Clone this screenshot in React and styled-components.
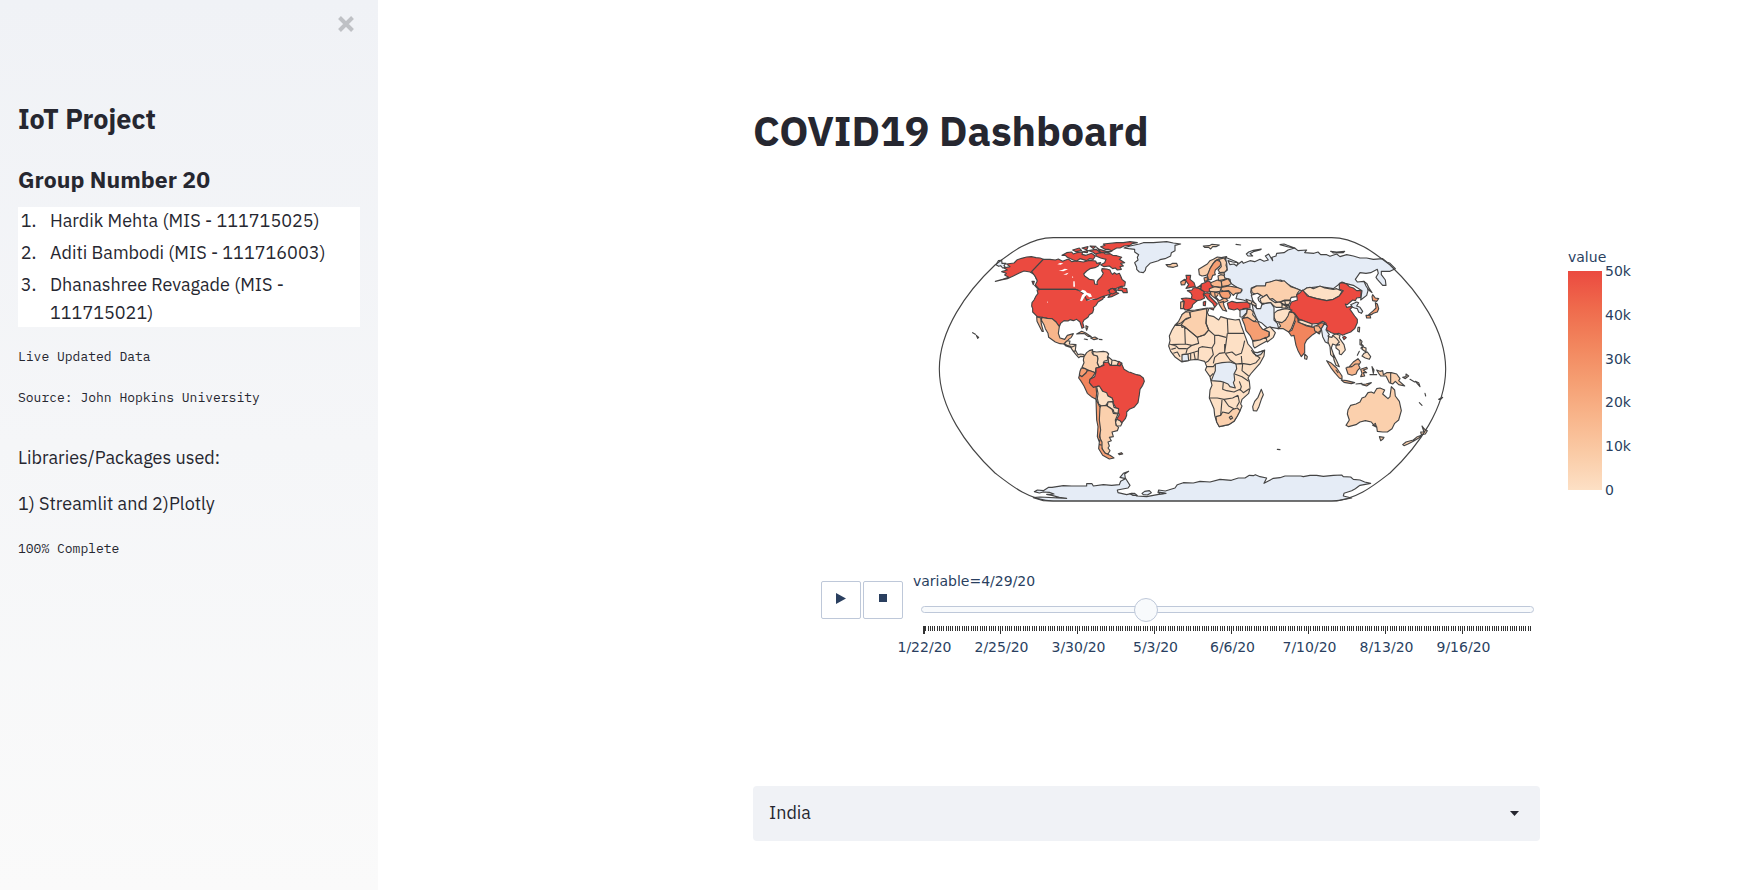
import React, { useState } from "react";
import styled, { createGlobalStyle } from "styled-components";

const ink = "#262730";
const plotInk = "#2a3f5f";
const sans = `"IBM Plex Sans", "Noto Sans", sans-serif`;
const plotFont = `"DejaVu Sans", Verdana, sans-serif`;

const Global = createGlobalStyle`
  *, *::before, *::after { box-sizing: border-box; }
  body { margin: 0; background: #fff; color: ${ink}; font-family: ${sans}; font-size: 18px; }
  h1, h2, h3, p, ol { margin: 0; }
`;

const Page = styled.div`
  display: flex;
  min-height: 100vh;
`;

const Sidebar = styled.aside`
  flex: 0 0 378px;
  padding: 12px 18px;
  background: linear-gradient(180deg, #f0f2f6, #fafafa);
`;

const CloseButton = styled.button`
  display: block;
  margin: 0 2px 0 auto;
  padding: 3px;
  border: 0;
  background: none;
  line-height: 0;
`;

const ProjectTitle = styled.h2`
  margin-top: 63px;
  font-size: 27px;
  line-height: 40px;
`;

const GroupTitle = styled.h3`
  margin-top: 24px;
  font-size: 23px;
  line-height: 32px;
`;

const Members = styled.ol`
  display: flex;
  flex-direction: column;
  gap: 4px;
  margin-top: 12px;
  padding: 0 0 0 32px;
  background: #fff;
  line-height: 28px;
`;

const Member = styled.li`
  padding-right: 32px;
  &::marker { content: counter(list-item) ".\\2002\\2005"; }
`;

const MonoLine = styled.p`
  margin-top: ${(p) => p.$gap}px;
  font-family: "IBM Plex Mono", "Liberation Mono", monospace;
  font-size: 13px;
  line-height: 20px;
`;

const TextLine = styled.p`
  margin-top: ${(p) => p.$gap}px;
  line-height: 28px;
`;

const Main = styled.main`
  flex: 1;
  min-width: 0;
  display: flex;
  justify-content: center;
  padding: 99px 0 48px 174px;
`;

const Column = styled.div`
  flex: 0 1 787px;
  min-width: 0;
`;

const Title = styled.h1`
  font-size: 41px;
  line-height: 64px;
`;

const Chart = styled.section`
  width: 900px;
  padding-top: 57px;
  color: ${plotInk};
  font: 14px/16px ${plotFont};
`;

const MapRow = styled.div`
  display: flex;
  gap: 118px;
  padding-left: 177px;
`;

const WorldMap = styled.svg`
  flex: none;
  width: 520px;
  height: 290px;
  stroke: #444;
  stroke-width: 3.4;
  stroke-linejoin: round;
`;

const Legend = styled.div`
  padding-top: 29px;
`;

const LegendBody = styled.div`
  display: flex;
  gap: 3px;
  margin-top: 6px;
`;

const ColorBar = styled.div`
  width: 34px;
  height: 219px;
  background: linear-gradient(0deg, #fde0c5, #facba6, #f8b58b, #f59e72, #f2855d, #ef6a4c, #eb4a40);
`;

const LegendScale = styled.div`
  display: flex;
  flex-direction: column;
  justify-content: space-between;
  margin: -8px 0;
`;

const Controls = styled.div`
  display: flex;
  gap: 10px;
  padding: 63px 0 0 68px;
`;

const PlayGroup = styled.div`
  display: flex;
  gap: 2px;
  padding-top: 8px;
`;

const PlayButton = styled.button`
  display: grid;
  place-items: center;
  width: 40px;
  height: 38px;
  padding: 0 0 4px;
  border: 1px solid #bec8d9;
  border-radius: 2px;
  background: #fff;
`;

const SliderPanel = styled.div`
  flex: none;
  width: 630px;
`;

const SliderLabel = styled.label`
  display: block;
`;

const Range = styled.input`
  display: block;
  appearance: none;
  width: 613px;
  height: 24px;
  margin: 8px 0 0 8px;
  background: none;
  &::-webkit-slider-runnable-track {
    height: 7px;
    border: 1px solid #bec8d9;
    border-radius: 4px;
    background: #f8fafc;
  }
  &::-webkit-slider-thumb {
    appearance: none;
    width: 24px;
    height: 24px;
    margin-top: -9px;
    border: 1px solid #bec8d9;
    border-radius: 50%;
    background: #f8fafc;
  }
`;

const Ticks = styled.svg`
  display: block;
  width: 612px;
  height: 9px;
  margin: 5px 0 0 9px;
  shape-rendering: crispEdges;
  stroke: #333;
`;

const Dates = styled.div`
  display: grid;
  grid-template-columns: repeat(8, 77px);
  width: 616px;
  margin: 4px 0 0 -27px;
  text-align: center;
`;

const SelectBox = styled.div`
  position: relative;
  margin-top: 131px;
`;

const Select = styled.select`
  display: block;
  appearance: none;
  width: 100%;
  height: 55px;
  padding: 0 16px 2px;
  border: 0;
  border-radius: 4px;
  background: #f0f2f6;
  color: ${ink};
  font: 18px ${sans};
`;

const Caret = styled.svg`
  position: absolute;
  right: 21px;
  top: 25px;
  pointer-events: none;
`;

const C = {
  none: "#e5ecf6",
  a: "#fde0c5",
  b: "#fbd0ad",
  c: "#f8b58b",
  d: "#f59e72",
  e: "#f2855d",
  r: "#eb4a40",
  w: "#fff",
};

const NORTH_AMERICA = [
  ["r", "M196,184L218,178L236,172L224,165L229,160L215,155L232,150L222,144L240,140L230,132L252,129L262,119L275,115L290,111L304,110L318,113L330,114L340,118L305,155L316,163L320,180L314,164L300,156L282,153L268,159L250,168L232,176L214,180Z"],
  ["r", "M340,118L360,118L376,120L385,117L398,124L415,117L425,125L440,123L460,126L478,121L497,123L500,130L512,128L505,138L495,143L480,146L470,153L461,162L464,168L478,178L492,180L494,192L502,193L501,186L504,180L514,170L520,160L515,152L516,146L530,147L540,150L543,158L548,163L553,158L560,163L568,160L572,168L576,178L586,186L584,198L570,200L556,206L543,206L534,212L552,208L562,210L554,216L566,220L545,230L534,232L542,222L524,228L524,232L514,234L500,238L478,242L468,238L458,222L448,212L436,208L328,208L316,195L322,182L316,170L305,155Z"],
  ["r", "M498,94L510,98L520,97L526,102L540,101L548,106L560,107L575,112L568,118L584,128L572,130L580,138L570,140L574,148L562,150L556,144L548,146L538,138L522,140L512,134L524,128L528,118L512,114L498,108Z"],
  ["r", "M512,80L525,76L520,72L560,68L580,68L600,65L622,68L606,71L600,76L582,78L570,84L560,84L545,92L535,88L525,88Z"],
  ["r", "M396,106L410,98L425,96L430,102L440,98L458,96L456,103L468,106L485,100L496,108L490,118L478,116L470,122L450,116L440,123L430,120L412,112L406,106Z"],
  ["r", "M428,90L448,84L455,92L438,95ZM456,84L474,80L470,90ZM480,78L498,79L490,86ZM476,92L498,88L512,98L496,102L488,96ZM500,82L508,88L530,94L546,93L534,98L512,96ZM456,96L474,92L472,98Z"],
  ["r", "M564,206L576,199L577,204L590,206L592,218L580,218L576,212L564,211ZM538,209L548,205L560,216L548,222L538,218Z"],
  ["r", "M328,208L436,208L448,212L462,222L470,241L485,238L500,238L512,232L522,228L518,238L504,246L498,256L490,262L491,268L488,278L478,284L474,292L462,300L458,308L462,322L456,325L450,306L440,298L430,302L420,299L414,303L402,302L392,310L388,320L378,306L366,296L352,295L336,292L322,290L308,276L308,266L305,258L306,248L312,240L318,228L324,220L321,210Z"],
  ["c", "M336,292L352,295L366,296L378,306L388,320L385,340L390,354L404,358L412,346L430,341L424,352L416,358L410,366L402,372L390,371L376,366L356,352L354,340L346,326L342,314L334,300ZM320,290L332,294L334,312L340,334L336,334L328,318L321,304Z"],
  ["a", "M402,372L410,363L420,363L418,372L438,374L436,390L444,404L452,402L462,404L463,410L452,409L446,413L438,404L430,394L422,382L408,378ZM404,372L414,377L424,380M424,382L438,376M430,394L438,392"],
  ["c", "M440,342L455,334L466,338L484,350L474,349L462,340ZM482,354L495,351L504,356L492,359ZM508,358L516,359ZM463,357L472,359ZM468,317L474,320L470,331L468,324Z"],
  ["r", "M128,338L136,343ZM139,346L146,352L143,355ZM306,184L313,184L310,194ZM314,196L322,205L328,209Z"],
  ["none", "M198,134L205,122L215,121L216,130L228,130L222,136L226,142L218,144L212,137L206,139Z"],
  ["none", "M582,84L600,78L628,72L640,68L670,68L710,65L730,69L752,72L735,76L735,92L724,98L722,108L705,116L690,119L685,122L660,130L648,142L646,151L640,158L628,156L620,148L620,142L614,128L624,120L622,112L626,104L614,96L614,88L596,86Z"],
  ["b", "M708,134L720,134L728,130L740,130L743,138L730,142L714,140Z"],
];

const LAKES = [
  "M382,133L390,129L400,130L392,134Z", "M386,152L396,150L404,146L414,148L400,154Z",
  "M400,164L410,160L416,158L410,164Z", "M430,184L434,184L435,200L430,200Z", "M426,168L430,172L427,174Z",
  "M444,211L452,214L458,209L466,212L471,218L482,221L486,230L478,232L470,224L464,230L456,244L450,242L456,226L462,220Z",
  "M470,242L486,236L496,235L480,241Z", "M351,244L354,247L351,248Z",
];

const SOUTH = [
  ["b", "M462,50L470,38L478,32L488,29L486,38L490,44L502,48L504,56L502,70L508,82L498,84L496,98L480,92L466,86L456,82L462,68L460,60Z"],
  ["a", "M488,34L500,36L520,34L530,36L536,42L532,52L534,60L522,64L520,74L508,82L502,68L504,56L502,48L490,44Z"],
  ["a", "M534,50L546,60L558,62L567,66L562,76L544,77L536,70ZM546,60L544,77"],
  ["r", "M566,64L576,70L570,80L562,76Z"],
  ["d", "M454,84L466,86L472,92L468,99L456,110L448,104L450,94Z"],
  ["e", "M448,106L456,110L468,99L472,92L480,92L496,98L488,110L480,118L479,126L484,136L498,140L500,160L498,178L484,170L472,160L462,138L452,122L446,114Z"],
  ["r", "M508,82L522,76L520,68L534,66L540,76L562,76L570,78L574,70L582,88L596,96L604,98L620,104L630,106L640,114L643,124L638,136L630,148L628,164L624,188L612,202L598,208L590,216L590,226L586,236L576,248L560,238L568,224L560,208L550,190L546,174L530,166L518,154L506,138L490,142L478,128L480,118L494,110L498,96L498,84Z"],
  ["a", "M500,140L508,138L518,154L530,158L534,168L546,174L550,184L534,186L528,196L514,198L506,192L502,176L504,160Z"],
  ["a", "M534,186L548,186L552,202L566,206L564,220L552,218L550,210L532,198Z"],
  ["a", "M560,238L570,242L576,250L572,258L560,258L556,248Z"],
  ["b", "M512,198L528,196L546,208L550,220L564,222L556,240L558,256L566,262L562,272L546,276L550,290L538,292L544,302L534,306L538,318L534,324L540,332L534,342L522,338L514,320L510,290L508,250L506,210Z"],
  ["d", "M498,178L504,190L510,202L508,240L512,270L508,290L516,306L516,326L526,340L540,346L552,354L538,357L518,346L506,326L508,306L502,290L504,260L500,240ZM504,296L511,304M506,312L514,316"],
  ["d", "M565,341L574,338L578,342L568,344Z"],
  ["none", "M365,483L340,482L310,473L330,471L410,475L388,472L366,466L350,463L372,462L358,457L340,456L328,459L313,455L322,450L340,452L356,442L366,442L400,437L425,438L470,438L470,431L486,431L490,438L520,434L545,436L568,434L572,424L586,416L570,412L580,400L596,394L584,402L586,414L600,436L594,444L562,450L564,458L590,464L606,460L620,468L650,470L682,464L704,460L684,458L686,450L706,453L735,444L742,434L760,428L790,429L810,424L840,426L870,418L904,421L925,414L945,414L958,406L970,407L976,404L990,410L1010,414L1002,430L1030,415L1050,413L1065,408L1080,408L1112,408L1120,410L1140,406L1160,406L1180,409L1210,406L1235,405L1240,410L1262,411L1270,418L1290,420L1304,426L1322,430L1290,436L1276,446L1265,452L1242,460L1240,468L1265,474L1220,483Z"],
  ["none", "M636,460L644,454L658,452L664,458L652,465L640,464Z"],
  ["none", "M600,461L614,460L622,466L608,466ZM686,456L708,460L690,462Z"],
];

const EAST = [
  ["b", "M118,164L116,148L132,138L142,132L150,122L160,118L172,111L184,113L200,110L196,120L176,117L166,122L160,130L150,146L146,160L138,166L126,168Z"],
  ["d", "M142,166L150,146L160,130L170,120L184,126L180,138L166,150L164,158L166,164L158,166L154,178L146,180Z"],
  ["b", "M176,118L192,114L200,126L198,136L202,146L196,156L180,158L174,150L184,140L182,128Z"],
  ["none", "M196,112L216,120L230,126L232,134L246,124L250,130L270,122L284,125L300,118L312,124L325,120L316,108L326,102L338,122L336,112L348,108L350,100L372,98L384,90L404,84L414,92L440,90L434,98L462,100L474,96L482,104L500,104L510,109L530,102L540,110L560,104L580,108L600,114L620,114L640,118L668,116L680,126L690,130L706,146L690,154L664,154L664,164L676,180L678,196L668,196L652,178L648,172L655,160L652,148L632,158L618,160L600,158L586,178L592,186L612,184L622,198L624,212L620,226L602,240L606,212L580,196L556,190L546,186L520,206L480,200L440,204L428,214L392,198L362,180L348,182L330,186L318,190L316,198L288,198L274,204L272,216L280,234L276,250L250,240L228,236L232,222L246,212L228,200L212,190L210,178L194,174L190,160L202,150L200,130Z"],
  ["none", "M264,108L259,102L266,96L280,91L304,87L300,90L280,95L270,101L278,108ZM360,74L372,72L382,76L404,84L385,81ZM512,94L530,96L554,94L550,98L520,99ZM228,73L242,75Z"],
  ["a", "M130,78L148,77L156,73L178,75L168,80L158,80L152,87L146,82L134,82Z"],
  ["w", "M204,122L218,126L234,128L230,138L222,132L210,134Z"],
  ["b", "M274,206L290,198L316,198L318,188L330,186L348,180L366,184L372,182L392,200L404,204L420,210L412,220L410,230L394,232L390,240L374,240L360,246L350,246L338,236L326,238L320,224L310,230L296,222L286,222L276,218Z"],
  ["a", "M310,230L320,224L330,238L346,248L360,246L380,252L366,262L348,262L340,256L332,248L318,250L304,250L300,236Z"],
  ["a", "M360,246L374,242L392,242L386,254L370,252ZM366,254L386,256L388,264L366,264ZM374,240L378,262M362,250L384,262"],
  ["a", "M428,212L440,204L450,202L460,206L480,198L494,204L520,208L530,206L546,214L538,228L520,238L500,242L470,236L448,230Z"],
  ["r", "M428,210L442,228L470,236L500,242L520,238L538,228L550,212L538,208L538,190L546,188L560,192L568,200L580,204L590,212L604,212L602,232L590,234L586,242L578,240L562,254L556,252L560,262L580,258L570,268L584,288L592,298L592,308L584,326L572,336L556,342L548,346L536,340L526,342L514,338L500,330L498,310L488,304L476,310L456,312L430,302L416,296L404,280L392,274L388,260L394,246L412,240L410,224L418,220Z"],
  ["r", "M548,352L554,349L559,353L552,359Z"],
  ["a", "M594,322L599,322L598,336L593,334Z"],
  ["none", "M572,254L590,246L596,248L590,258L600,262L608,274L604,280L596,276L592,266L584,264L578,262Z"],
  ["none", "M612,184L620,190L628,206L636,218L626,210L618,198Z"],
  ["d", "M636,230L638,224L646,234L656,236L650,244L638,242ZM646,248L652,252L656,266L652,276L640,280L634,284L626,284L640,272L648,264ZM618,286L630,286L632,294L620,294Z"],
  ["a", "M414,298L430,302L456,312L456,320L440,316L418,308Z"],
  ["e", "M392,284L404,282L414,298L414,306L440,318L460,322L484,308L494,310L484,328L478,342L470,336L458,344L440,360L434,372L434,398L424,410L414,392L408,376L402,346L394,348L386,336L396,330L406,304L398,300Z"],
  ["c", "M462,318L476,318L484,330L474,338L464,332Z"],
  ["a", "M434,402L442,410L440,418L434,416Z"],
  ["c", "M384,276L400,278L406,286L404,300L394,326L386,336L370,326L354,326L362,318L356,308L376,300L382,288Z"],
  ["a", "M342,280L352,272L366,268L378,266L396,270L388,276L384,288L376,300L366,308L348,304L342,292Z"],
  ["none", "M276,250L288,262L302,256L318,250L332,248L342,262L342,300L352,310L356,326L334,322L322,324L304,308L294,304L288,292L280,272Z"],
  ["w", "M274,226L292,220L302,226L294,234L296,242L306,252L302,266L290,266L286,252L278,240Z"],
  ["r", "M202,250L216,244L230,248L262,246L270,252L270,264L250,266L240,272L232,266L222,270L206,266Z"],
  ["a", "M258,238L276,244L288,252L288,258L274,252L264,248ZM274,246L276,254"],
  ["none", "M240,270L262,266L260,278L246,292L240,290Z"],
  ["b", "M262,268L272,268L280,276L278,284L290,298L284,304L268,302L250,292L260,280Z"],
  ["d", "M246,296L262,292L280,304L294,306L300,318L308,328L328,336L326,350L300,360L278,362L270,346L258,332L254,316Z"],
  ["a", "M278,364L300,360L318,352L322,362L300,374L284,384L280,378Z"],
  ["a", "M312,328L330,320L346,338L340,352L322,366L318,354L328,348L328,336Z"],
  ["none", "M484,326L494,310L502,318L498,330L508,344L504,348L510,360L504,370L496,366L488,350Z"],
  ["a", "M506,350L516,352L518,346L530,356L538,366L528,376L518,372L514,384L518,396L524,416L512,404L510,380L504,366ZM518,346L528,342L540,346L538,354L552,374L556,390L544,404L538,402L538,392L528,384L528,376L540,374"],
  ["r", "M78,166L92,166L90,178L102,188L106,200L92,202L78,205L86,194L76,180L80,176Z"],
  ["d", "M62,186L74,178L78,184L74,194L64,195Z"],
  ["r", "M82,212L96,210L100,204L112,202L124,210L134,214L130,224L134,234L122,240L110,242L94,236L96,226L92,218Z"],
  ["r", "M64,236L78,234L94,236L112,242L98,254L96,262L88,268L76,270L70,264L72,244Z"],
  ["c", "M62,246L72,244L70,266L62,266Z"],
  ["r", "M124,192L134,188L144,182L154,188L158,204L150,206L150,216L134,216L122,208Z"],
  ["d", "M132,174L142,170L142,182L134,184ZM110,204L124,194L122,206Z"],
  ["r", "M130,222L142,218L152,222L148,228L160,240L172,252L164,262L158,250L144,238L138,230ZM146,264L162,264L160,270ZM130,246L137,244L136,257L130,256Z"],
  ["c", "M152,188L172,180L184,184L186,202L164,200L154,196Z"],
  ["c", "M184,184L204,176L214,190L206,196L186,200Z"],
  ["c", "M184,202L206,198L230,202L246,208L242,218L226,220L220,226L206,212L190,214L180,208Z"],
  ["b", "M174,168L182,164L192,166L196,178L176,182ZM174,160L192,158L194,166"],
  ["b", "M148,206L164,200L184,204L180,214L164,216L148,214Z"],
  ["d", "M178,216L190,214L206,214L212,226L208,234L192,236L180,228Z"],
  ["c", "M150,214L164,216L178,220L186,234L198,236L204,242L190,248L192,258L200,274L188,270L178,254L172,240L154,226ZM164,216L166,234M174,224L168,232L178,242L190,236M178,248L192,244"],
  ["a", "M82,272L106,270L142,264L146,268L142,278L146,286L162,290L176,300L182,290L202,296L226,300L238,298L244,318L256,350L264,372L276,386L282,396L290,400L314,390L312,408L300,430L284,448L272,462L264,474L268,484L270,504L266,520L246,538L242,552L246,558L240,572L232,588L222,604L206,614L178,620L170,606L164,586L162,566L148,534L150,510L156,496L150,470L136,450L140,440L134,424L118,420L110,418L92,420L66,426L46,412L32,394L26,378L30,362L28,348L36,330L46,314L60,302L66,284L76,276Z"],
  ["b", "M66,284L76,276L88,276L92,292L78,296L64,308L46,316L56,304Z"],
  ["b", "M90,276L140,266L140,280L138,310L146,330L134,344L112,352L76,322L64,314L74,300L92,292Z"],
  ["none", "M166,432L186,428L210,426L228,432L230,446L222,462L224,480L220,488L226,504L210,500L204,492L190,486L182,484L154,482L160,466L166,452Z"],
  ["none", "M66,404L84,402L86,422L66,424Z"],
  ["none", "M280,396L292,398L312,392L302,404L288,408Z"],
  ["b", "M168,590L182,586L188,576L206,580L218,568L232,564L240,572L232,588L222,604L206,614L178,620L170,606ZM208,592L214,588L218,594L212,598Z"],
];

const AFRICA_BORDERS =
  "M46,316L64,316L66,322L74,320L76,372L34,374M76,322L112,352L134,344L146,330M140,286L138,310L146,330L164,346L176,346L198,352M202,296L204,340L252,340M202,340L198,370L194,396M164,346L164,370L156,384M112,352L116,370L96,376L82,386L78,400M76,372L96,376M116,384L126,380L156,384L160,404L144,424L136,428M116,384L114,418M194,372L194,398L178,400L164,412L160,430M254,362L250,380L244,400L228,406L216,396L196,400M196,400L210,420L228,432L246,430L244,408M246,430L270,434L288,428L300,414L280,400L274,390M228,432L248,432L246,452L266,468M224,462L246,470L266,484M148,534L172,534L192,538L218,534L234,526M190,486L188,508L200,512L222,516L240,508M186,540L182,586M192,538L206,558L222,566M234,526L238,546L230,560M240,508L250,518L268,506M238,484L244,500L240,512M28,372L48,378L56,386L80,386M34,388L48,384M40,400L52,396L60,410M66,404L84,402L104,396L116,392M92,400L92,420M102,398L106,420M138,440L160,440L166,432M150,470L160,460";

const OCEANIA = [
  ["a", "M304,148L310,164L304,178L296,202L290,213L280,212L278,200L284,184L294,172Z"],
  ["b", "M564,210L572,196L588,192L600,186L606,174L616,170L624,158L634,156L642,160L650,146L660,144L674,150L668,162L684,176L690,170L694,140L704,150L706,168L718,184L724,212L716,240L704,250L696,266L682,276L668,276L652,274L650,260L640,254L634,246L616,242L600,246L588,254L566,260L558,256L568,240L562,222ZM638,256L646,250L650,262Z"],
  ["b", "M658,290L672,292L668,298L662,302Z"],
  ["b", "M728,314L738,306L760,300L772,290L784,286L780,292L760,304L744,312L732,317ZM784,284L782,276L792,276L786,258L794,268L802,272L796,282Z"],
  ["b", "M650,90L660,94L668,92L670,104L680,98L694,98L710,102L720,116L716,122L734,138L716,134L706,124L698,132L688,128L678,108L662,108L656,100ZM692,98L692,130"],
  ["c", "M558,84L568,80L580,66L594,56L602,66L596,76L600,84L592,92L588,102L576,106L564,102ZM560,82L576,80L586,72L598,72"],
  ["c", "M500,62L512,68L530,84L546,108L546,118L538,114L524,98L512,82ZM544,120L560,122L584,128L574,131L552,127Z"],
  ["c", "M602,88L620,82L622,86L610,90L620,98L610,98L614,108L602,110L606,100Z"],
  ["c", "M588,132L606,130ZM606,134L618,132L634,128L620,138ZM636,80L642,90L640,100ZM630,104L650,104ZM528,90L534,98Z"],
  ["a", "M520,42L530,62L538,80L528,76L522,60Z"],
  ["a", "M728,112L738,110L738,102L746,108L736,116ZM750,118L764,126ZM766,124L776,128L780,140ZM795,160L797,168ZM778,188L786,196ZM836,178L842,178L848,172ZM352,328L360,329Z"],
  ["a", "M600,-2L606,4L604,12L610,18L600,14ZM608,20L618,24L618,36L606,28ZM612,40L622,36L632,50L628,58L616,54L606,48ZM592,46L598,34ZM602,26L606,20"],
];

const Shapes = ({ items, shift }) => (
  <g transform={shift}>
    {items.map(([tone, d]) => (
      <path key={d} d={d} fill={C[tone]} />
    ))}
  </g>
);

const members = [
  "Hardik Mehta (MIS - 111715025)",
  "Aditi Bambodi (MIS - 111716003)",
  "Dhanashree Revagade (MIS - 111715021)",
];
const scale = ["50k", "40k", "30k", "20k", "10k", "0"];
const dates = ["1/22/20", "2/25/20", "3/30/20", "5/3/20", "6/6/20", "7/10/20", "8/13/20", "9/16/20"];
const DAYS = 268;

export default function App() {
  const [day, setDay] = useState(97);
  const current = new Date(2020, 0, 23 + day);
  return (
    <>
      <Global />
      <Page>
        <Sidebar>
          <CloseButton aria-label="Close sidebar">
            <svg width="18" height="18" viewBox="0 0 18 18">
              <path d="M2.5 2.5L15.5 15.5M15.5 2.5L2.5 15.5" stroke="#bfc1c5" strokeWidth="4" />
            </svg>
          </CloseButton>
          <ProjectTitle>IoT Project</ProjectTitle>
          <GroupTitle>Group Number 20</GroupTitle>
          <Members>
            {members.map((m) => (
              <Member key={m}>{m}</Member>
            ))}
          </Members>
          <MonoLine $gap={20}>Live Updated Data</MonoLine>
          <MonoLine $gap={21}>Source: John Hopkins University</MonoLine>
          <TextLine $gap={36}>Libraries/Packages used:</TextLine>
          <TextLine $gap={18}>1) Streamlit and 2)Plotly</TextLine>
          <MonoLine $gap={21}>100% Complete</MonoLine>
        </Sidebar>
        <Main>
          <Column>
            <Title>COVID19 Dashboard</Title>
            <Chart>
              <MapRow>
                <WorldMap viewBox="0 0 1560 870" role="img" aria-label="World map">
                  <Shapes items={NORTH_AMERICA} />
                  <g fill="#fff" stroke="none">
                    {LAKES.map((d) => (
                      <path key={d} d={d} />
                    ))}
                  </g>
                  <Shapes items={SOUTH} shift="translate(0 360)" />
                  <Shapes items={EAST} shift="translate(690 0)" />
                  <path d={AFRICA_BORDERS} transform="translate(690 0)" fill="none" />
                  <Shapes items={OCEANIA} shift="translate(690 360)" />
                  <path
                    d="M370,53C300,53 240,100 195,135C110,215 28,330 28,447C28,564 110,679 195,759C240,794 300,843 370,843L1205,843C1275,843 1335,794 1380,759C1465,679 1547,564 1547,447C1547,330 1465,215 1380,135C1335,100 1275,53 1205,53Z"
                    fill="none"
                  />
                </WorldMap>
                <Legend>
                  value
                  <LegendBody>
                    <ColorBar />
                    <LegendScale>
                      {scale.map((s) => (
                        <span key={s}>{s}</span>
                      ))}
                    </LegendScale>
                  </LegendBody>
                </Legend>
              </MapRow>
              <Controls>
                <PlayGroup>
                  <PlayButton aria-label="Play">
                    <svg width="10" height="11">
                      <path d="M0 0L10 5.5L0 11Z" fill={plotInk} />
                    </svg>
                  </PlayButton>
                  <PlayButton aria-label="Stop">
                    <svg width="8" height="8">
                      <path d="M0 0H8V8H0Z" fill={plotInk} />
                    </svg>
                  </PlayButton>
                </PlayGroup>
                <SliderPanel>
                  <SliderLabel htmlFor="day">
                    {`variable=${current.getMonth() + 1}/${current.getDate()}/20`}
                  </SliderLabel>
                  <Range
                    id="day"
                    type="range"
                    min="0"
                    max={DAYS}
                    value={day}
                    onChange={(e) => setDay(Number(e.target.value))}
                  />
                  <Ticks aria-hidden="true">
                    {Array.from({ length: DAYS + 1 }, (_, i) => {
                      const x = Math.round(i * 2.265) + 1.5;
                      return <path key={i} d={`M${x} 0V${i % 34 === 0 ? 8 : 5}`} strokeWidth={i === 0 ? 2 : 1} />;
                    })}
                  </Ticks>
                  <Dates>
                    {dates.map((d) => (
                      <span key={d}>{d}</span>
                    ))}
                  </Dates>
                </SliderPanel>
              </Controls>
            </Chart>
            <SelectBox>
              <Select aria-label="Country" defaultValue="India">
                <option>India</option>
              </Select>
              <Caret width="9" height="5">
                <path d="M0 0H9L4.5 5Z" fill={ink} />
              </Caret>
            </SelectBox>
          </Column>
        </Main>
      </Page>
    </>
  );
}
